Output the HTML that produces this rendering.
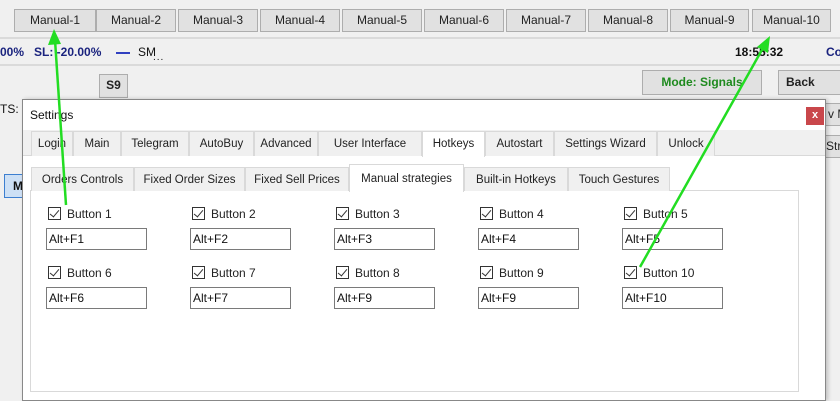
<!DOCTYPE html><html><head><style>
*{box-sizing:border-box}body{margin:0;width:840px;height:400px;overflow:hidden;background:#f0f0f0;font-family:"Liberation Sans",sans-serif;font-size:12px;color:#111;position:relative}
.a{position:absolute}
.b{position:absolute;border:1px solid #adadad;background:#e1e1e1;text-align:center;line-height:21px;font-size:12px;color:#222}
.t{position:absolute;border:1px solid #d9d9d9;border-bottom:none;background:#f0f0f0;text-align:center;font-size:11.5px;color:#222;white-space:nowrap}
.cb{position:absolute;width:13px;height:13px;border:1px solid #333;background:#fff}
.cb:after{content:"";position:absolute;left:3px;top:0px;width:4px;height:8px;border:solid #333;border-width:0 1.3px 1.3px 0;transform:rotate(40deg)}
.lb{position:absolute;font-size:12px;color:#222}
.in{position:absolute;width:101px;height:22px;border:1px solid #7a7a7a;background:#fff;padding-left:2px;line-height:20px;font-size:12px}
</style></head><body>
<div class="a" style="left:0;top:37px;width:840px;height:2px;background:#dadada"></div>
<div class="a" style="left:0;top:64px;width:840px;height:2px;background:#dadada"></div>
<div class="b" style="left:14px;top:9px;width:82px;height:23px">Manual-1</div>
<div class="b" style="left:96px;top:9px;width:80px;height:23px">Manual-2</div>
<div class="b" style="left:178px;top:9px;width:80px;height:23px">Manual-3</div>
<div class="b" style="left:260px;top:9px;width:80px;height:23px">Manual-4</div>
<div class="b" style="left:342px;top:9px;width:80px;height:23px">Manual-5</div>
<div class="b" style="left:424px;top:9px;width:80px;height:23px">Manual-6</div>
<div class="b" style="left:506px;top:9px;width:80px;height:23px">Manual-7</div>
<div class="b" style="left:588px;top:9px;width:80px;height:23px">Manual-8</div>
<div class="b" style="left:670px;top:9px;width:79px;height:23px">Manual-9</div>
<div class="b" style="left:752px;top:9px;width:79px;height:23px">Manual-10</div>
<div class="a" style="left:0;top:45px;font-weight:bold;color:#1a237e;font-size:12px">00%&nbsp;&nbsp; SL: -20.00%</div>
<div class="a" style="left:116px;top:52px;width:14px;height:2px;background:#3040c0"></div>
<div class="a" style="left:138px;top:45px;font-size:12px">SM</div>
<div class="a" style="left:153px;top:52px;font-size:10px;letter-spacing:1px">...</div>
<div class="a" style="left:735px;top:45px;font-weight:bold;font-size:12px">18:55:32</div>
<div class="a" style="left:826px;top:45px;font-weight:bold;color:#1a237e;font-size:12px">Co</div>
<div class="b" style="left:99px;top:74px;width:29px;height:24px;font-weight:bold">S9</div>
<div class="b" style="left:642px;top:70px;width:120px;height:25px;font-weight:bold;color:#1e8a1e;line-height:23px">Mode: Signals</div>
<div class="b" style="left:778px;top:70px;width:70px;height:25px;font-weight:bold;text-align:left;padding-left:7px;line-height:23px">Back</div>
<div class="a" style="left:0;top:102px;white-space:nowrap">TS: C</div>
<div class="a" style="left:4px;top:174px;width:20px;height:24px;border:1px solid #3d7fd0;background:#cde0f5;font-weight:bold;padding:4px 0 0 8px">M</div>
<div class="b" style="left:822px;top:103px;width:30px;height:23px;text-align:left;padding-left:5px">v M</div>
<div class="b" style="left:822px;top:135px;width:30px;height:23px;text-align:left;padding-left:3px">Stra</div>
<div class="a" style="left:22px;top:99px;width:804px;height:302px;background:#fff;border:1px solid #888;box-shadow:2px 0 4px rgba(0,0,0,.2)"></div>
<div class="a" style="left:30px;top:108px;font-size:12px">Settings</div>
<div class="a" style="left:806px;top:107px;width:18px;height:18px;background:#c9474b;color:#fff;font-size:11px;font-weight:bold;text-align:center;line-height:17px">x</div>
<div class="a" style="left:23px;top:130px;width:802px;height:26px;background:#f0f0f0;border-bottom:1px solid #d9d9d9"></div>
<div class="t" style="left:31px;top:131px;width:42px;height:25px;line-height:25px">Login</div>
<div class="t" style="left:73px;top:131px;width:48px;height:25px;line-height:25px">Main</div>
<div class="t" style="left:121px;top:131px;width:68px;height:25px;line-height:25px">Telegram</div>
<div class="t" style="left:189px;top:131px;width:65px;height:25px;line-height:25px">AutoBuy</div>
<div class="t" style="left:254px;top:131px;width:64px;height:25px;line-height:25px">Advanced</div>
<div class="t" style="left:318px;top:131px;width:104px;height:25px;line-height:25px">User Interface</div>
<div class="t" style="left:422px;top:131px;width:63px;height:26px;line-height:25px;background:#fff">Hotkeys</div>
<div class="t" style="left:485px;top:131px;width:69px;height:25px;line-height:25px">Autostart</div>
<div class="t" style="left:554px;top:131px;width:103px;height:25px;line-height:25px">Settings Wizard</div>
<div class="t" style="left:657px;top:131px;width:58px;height:25px;line-height:25px">Unlock</div>
<div class="a" style="left:30px;top:190px;width:769px;height:202px;border:1px solid #d9d9d9;background:#fff"></div>
<div class="t" style="left:31px;top:167px;width:103px;height:24px;line-height:24px">Orders Controls</div>
<div class="t" style="left:134px;top:167px;width:111px;height:24px;line-height:24px">Fixed Order Sizes</div>
<div class="t" style="left:245px;top:167px;width:104px;height:24px;line-height:24px">Fixed Sell Prices</div>
<div class="t" style="left:349px;top:164px;width:115px;height:28px;line-height:28px;background:#fff">Manual strategies</div>
<div class="t" style="left:464px;top:167px;width:104px;height:24px;line-height:24px">Built-in Hotkeys</div>
<div class="t" style="left:568px;top:167px;width:102px;height:24px;line-height:24px">Touch Gestures</div>

<div class="cb" style="left:48px;top:207px"></div><div class="lb" style="left:67px;top:207px">Button 1</div><div class="in" style="left:46px;top:228px">Alt+F1</div>
<div class="cb" style="left:192px;top:207px"></div><div class="lb" style="left:211px;top:207px">Button 2</div><div class="in" style="left:190px;top:228px">Alt+F2</div>
<div class="cb" style="left:336px;top:207px"></div><div class="lb" style="left:355px;top:207px">Button 3</div><div class="in" style="left:334px;top:228px">Alt+F3</div>
<div class="cb" style="left:480px;top:207px"></div><div class="lb" style="left:499px;top:207px">Button 4</div><div class="in" style="left:478px;top:228px">Alt+F4</div>
<div class="cb" style="left:624px;top:207px"></div><div class="lb" style="left:643px;top:207px">Button 5</div><div class="in" style="left:622px;top:228px">Alt+F5</div>
<div class="cb" style="left:48px;top:266px"></div><div class="lb" style="left:67px;top:266px">Button 6</div><div class="in" style="left:46px;top:287px">Alt+F6</div>
<div class="cb" style="left:192px;top:266px"></div><div class="lb" style="left:211px;top:266px">Button 7</div><div class="in" style="left:190px;top:287px">Alt+F7</div>
<div class="cb" style="left:336px;top:266px"></div><div class="lb" style="left:355px;top:266px">Button 8</div><div class="in" style="left:334px;top:287px">Alt+F9</div>
<div class="cb" style="left:480px;top:266px"></div><div class="lb" style="left:499px;top:266px">Button 9</div><div class="in" style="left:478px;top:287px">Alt+F9</div>
<div class="cb" style="left:624px;top:266px"></div><div class="lb" style="left:643px;top:266px">Button 10</div><div class="in" style="left:622px;top:287px">Alt+F10</div>

<svg class="a" style="left:0;top:0" width="840" height="400">
<g stroke="#22dd22" stroke-width="2.5" fill="#22dd22">
<line x1="66" y1="205" x2="55" y2="40"/>
<polygon points="54,29 48,45 61,44" stroke="none"/>
<line x1="640" y1="267" x2="763" y2="48"/>
<polygon points="770,36 757,47 768,53" stroke="none"/>
</g></svg>
</body></html>
